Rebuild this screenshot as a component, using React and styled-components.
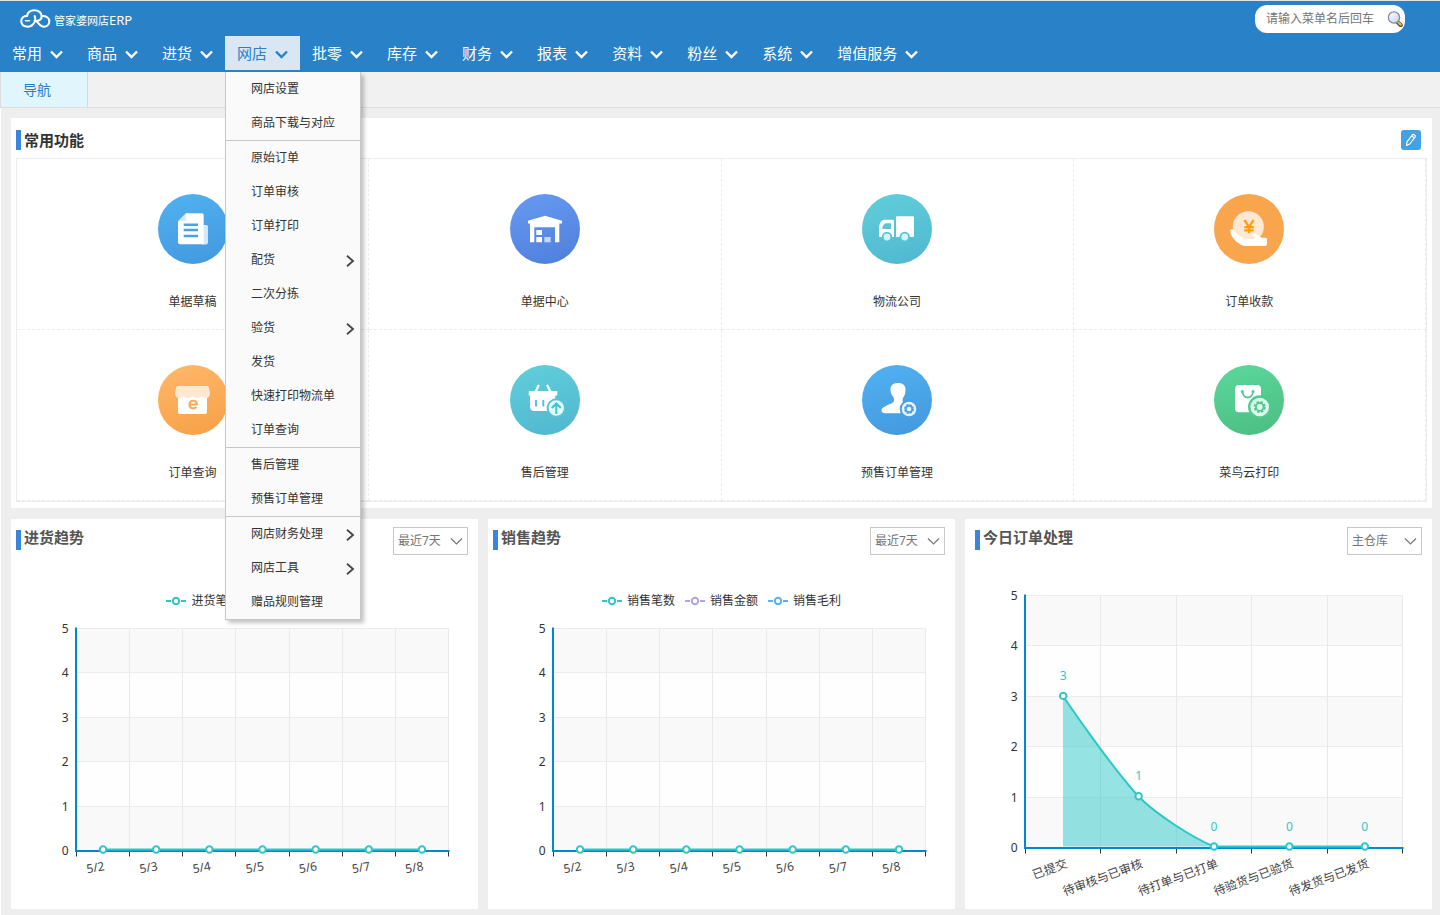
import React from "react";
import styled, { createGlobalStyle } from "styled-components";

const GlobalStyle = createGlobalStyle`
  *, *::before, *::after { box-sizing: border-box; }
  body {
    margin: 0;
    background: #eeeeee;
    color: #333333;
    font-family: "Noto Sans", "Noto Sans CJK SC", sans-serif;
    font-size: 12px;
  }
  button, input, select { font-family: inherit; }
  ul { list-style: none; margin: 0; padding: 0; }
`;

const Header = styled.header`
  height: 72px;
  border-top: 1px solid #dfe6ea;
  background: #2981c8;
  color: #ffffff;
`;

const TopRow = styled.div`
  display: flex;
  justify-content: space-between;
  align-items: center;
  height: 35px;
  padding: 0 35px 0 20px;
`;

const Brand = styled.a`
  display: flex;
  align-items: center;
  gap: 3px;
  color: #ffffff;
  font-size: 11px;
  line-height: 18px;
  text-decoration: none;
  svg { display: block; }
`;

const BrandName = styled.span`
  padding-top: 3px;
`;

const BrandSuffix = styled.span`
  font-size: 13px;
`;

const SearchBox = styled.label`
  display: flex;
  align-items: center;
  width: 150px;
  height: 28px;
  padding: 0 2px 0 11px;
  border-radius: 12px;
  background: #ffffff;
`;

const SearchInput = styled.input`
  flex: 1;
  min-width: 0;
  padding: 0;
  border: 0;
  outline: 0;
  background: transparent;
  font-size: 12px;
  &::placeholder { color: #757575; opacity: 1; }
`;

const NavList = styled.ul`
  display: flex;
`;

const NavItem = styled.li`
  position: relative;
`;

const NavButton = styled.button`
  display: flex;
  align-items: center;
  gap: 8px;
  height: 34px;
  padding: 0 12px;
  border: 0;
  background: ${(p) => (p.$active ? "#d9e7f4" : "transparent")};
  color: ${(p) => (p.$active ? "#2981c8" : "#ffffff")};
  font-size: 15px;
  line-height: 20px;
  white-space: nowrap;
  cursor: pointer;
  svg { margin-top: 2px; }
`;

const Dropdown = styled.div`
  position: absolute;
  z-index: 2;
  top: calc(100% + 2px);
  left: 0;
  width: 136px;
  border: solid #c8c8c8;
  border-width: 0 1px 1px;
  background: #fafafa;
  box-shadow: 3px 3px 4px rgba(0, 0, 0, 0.24);
`;

const MenuGroup = styled.ul`
  & + & { border-top: 1px solid #c8c8c8; }
`;

const MenuLink = styled.a`
  display: flex;
  align-items: center;
  justify-content: space-between;
  height: 34px;
  padding: 0 5px 0 25px;
  color: #333333;
  line-height: 18px;
  text-decoration: none;
  white-space: nowrap;
  svg { margin-top: 1px; }
`;

const TabBar = styled.nav`
  display: flex;
  height: 36px;
  border-left: 1px solid #dddddd;
  border-bottom: 1px solid #dddddd;
  background: #f1f1f1;
`;

const Tab = styled.a`
  width: 87px;
  padding-left: 22px;
  border-right: 1px solid #d3d9dc;
  background: #e1f5fd;
  color: #2981c8;
  font-size: 14px;
  line-height: 35px;
  text-decoration: none;
`;

const Main = styled.main`
  display: grid;
  gap: 11px;
  padding: 10px 8px 6px 10px;
  border-left: 1px solid #ffffff;
`;

const Card = styled.section`
  min-width: 0;
  background: #ffffff;
`;

const FunctionsCard = styled(Card)`
  padding: 0 5px 6px;
`;

const FunctionsHeader = styled.div`
  display: flex;
  align-items: center;
  justify-content: space-between;
  height: 40px;
  padding: 4px 6px 0 0;
`;

const Title = styled.h2`
  display: flex;
  gap: 3px;
  margin: 0;
  color: ${(p) => (p.$muted ? "#555555" : "#333333")};
  font-size: 15px;
  font-weight: 700;
  line-height: ${(p) => (p.$muted ? "14px" : "20px")};
  &::before {
    content: "";
    width: 5px;
    height: 20px;
    background: #3a84dc;
  }
`;

const EditButton = styled.button`
  display: grid;
  place-items: center;
  width: 20px;
  height: 20px;
  padding: 0;
  border: 0;
  border-radius: 3px;
  background: #45a1e6;
  cursor: pointer;
`;

const FunctionGrid = styled.ul`
  display: grid;
  grid-template-columns: repeat(4, 1fr);
  border: 1px solid #ececec;
`;

const FunctionCell = styled.li`
  border: dashed #ececec;
  border-width: 0 1px 1px 0;
`;

const FunctionLink = styled.a`
  display: flex;
  flex-direction: column;
  align-items: center;
  gap: 29px;
  height: 170px;
  padding-top: 35px;
  color: #333333;
  line-height: 18px;
  text-decoration: none;
  svg { display: block; }
`;

const ChartRow = styled.div`
  display: grid;
  grid-template-columns: repeat(3, minmax(0, 1fr));
  gap: 10px;
`;

const ChartHeader = styled.div`
  display: flex;
  align-items: flex-start;
  justify-content: space-between;
  height: 46px;
  padding: 8px 10px 0 ${(p) => (p.$inset ? "10px" : "5px")};
  ${Title} { padding-top: 3px; }
`;

const SelectBox = styled.div`
  display: grid;
  align-items: center;
  width: 75px;
  > * { grid-area: 1 / 1; }
  svg { justify-self: end; margin-right: 5px; pointer-events: none; }
`;

const Select = styled.select`
  appearance: none;
  width: 100%;
  height: 28px;
  padding: 0 4px 1px;
  border: 1px solid #c8c8c8;
  border-radius: 0;
  background: #ffffff;
  color: #757575;
  font-size: 12px;
`;

const Legend = styled.ul`
  display: flex;
  justify-content: center;
  gap: 10px;
  height: 46px;
  padding-top: 26px;
  line-height: 20px;
`;

const LegendItem = styled.li`
  display: flex;
  align-items: center;
  gap: 5px;
`;

const ChartSvg = styled.svg`
  display: block;
  width: 100%;
  height: auto;
  font-size: 12px;
`;

function Chevron({ weight = 2.4, right = false, color = "currentColor" }) {
  return right ? (
    <svg width="10" height="14" viewBox="0 0 10 14" fill="none" stroke="#444" strokeWidth="1.800" aria-hidden="true">
      <path d="M2 1.800l6 5.200-6 5.200" />
    </svg>
  ) : (
    <svg width="13" height="9" viewBox="0 0 13 9" fill="none" stroke={color} strokeWidth={weight} aria-hidden="true">
      <path d="M1 1.500l5.500 5.500 5.500-5.500" />
    </svg>
  );
}

function CloudLogo() {
  return (
    <svg width="31" height="19" viewBox="0 0 31 19" fill="none" stroke="#fff" strokeWidth="2.100" strokeLinecap="round" aria-hidden="true">
      <path d="M11.500 16.700C8 18.800 1.300 17.800 1.300 12.200C1.300 8.800 4 6.900 7 6.900C7.600 3.400 10.600 1.200 14.400 1.200C18.400 1.200 21.600 3.800 21.700 7.200C21.800 10.200 19 12.100 16.300 12.100C18.800 14 20 17.700 24 17.700C27.200 17.700 29.300 15.200 29.300 12.200C29.300 9 26.200 6.600 21.700 7" />
      <path d="M14.700 7.200C16.200 10.600 14.600 14.800 11.500 16.700" />
      <path d="M5.500 11.800H9.500" strokeWidth="1.600" />
    </svg>
  );
}

function Magnifier() {
  return (
    <svg width="16" height="16" viewBox="0 0 16 16" aria-hidden="true">
      <defs>
        <linearGradient id="lens" x1="0" y1="0" x2="1" y2="1">
          <stop offset="0" stopColor="#fff" />
          <stop offset="1" stopColor="#bfd2f8" />
        </linearGradient>
      </defs>
      <path d="M10.500 11l3.300 3.200" stroke="#5b4a2c" strokeWidth="4" strokeLinecap="round" />
      <path d="M11 11l2.600 2.600" stroke="#eab640" strokeWidth="2.400" strokeLinecap="round" />
      <circle cx="7" cy="6.500" r="5.600" fill="url(#lens)" stroke="#858a93" strokeWidth="1.300" />
    </svg>
  );
}

const glyphs = {
  draft: (
    <>
      <path d="M45 31h3.500a1.500 1.500 0 0 1 1.500 1.500v16a2 2 0 0 1-2 2h-4z" fill="#cfe9ff" />
      <path d="M28 19.300h16a1.700 1.700 0 0 1 1.700 1.700v29.300H22a2 2 0 0 1-2-2V27.300z" fill="#fff" />
      <path d="M28 19.300v6a2 2 0 0 1-2 2h-6z" fill="#cfe9ff" />
      <path d="M25.700 30.700H40M25.700 36H40M25.700 42H40" stroke="#48a3e6" strokeWidth="2.600" />
    </>
  ),
  warehouse: (
    <>
      <path d="M18 26.700L35 21.700l17 5v2.800h-2.700v18.800H45v-15H24.300v15H20V29.500h-2z" fill="#fff" />
      <path d="M26.300 36H32v5h-5.700zM26.300 43H32v5.300h-5.700z" fill="#fff" />
      <path d="M34.300 43h6.400v5.300h-6.400z" fill="#c4d6ff" />
    </>
  ),
  truck: (
    <>
      <path d="M35 22.300h16a1 1 0 0 1 1 1v18.700a1 1 0 0 1-1 1H34V23.300a1 1 0 0 1 1-1z" fill="#fff" />
      <path d="M22.500 25.800H31a1 1 0 0 1 1 1V43H18a1 1 0 0 1-1-1V34.300c0-4 2-8.500 5.500-8.500zM24.500 29.300c-2.500 0-4 2.500-4.200 5.700H29v-5.700z" fill="#fff" fillRule="evenodd" />
      <circle cx="25" cy="43" r="4.300" fill="#d0f6fb" stroke="#58c2d3" strokeWidth="1.800" />
      <circle cx="42.700" cy="43" r="4.300" fill="#d0f6fb" stroke="#58c2d3" strokeWidth="1.800" />
    </>
  ),
  payment: (
    <>
      <circle cx="34.300" cy="32.700" r="15.500" fill="#ffe8d1" />
      <path d="M30.500 26l4.500 7 4.500-7M35 32.500v6.800M30.300 33.200h9.400M30.300 36.300h9.400" fill="none" stroke="#ff9b0c" strokeWidth="2.300" />
      <path d="M16.300 37c0-2 2-2.800 3.300-1.300C22 39 27 44.500 34 45h6c1.500-.2 1-1.800-.8-2.800-1.700-1-1.500-2.800.6-2.900 2.500 0 5.200 3.500 8.200 4.500h3.500A1.500 1.500 0 0 1 53 45.300V50a2 2 0 0 1-2 2H32c-6 0-15.700-8-15.700-15z" fill="#fff" />
    </>
  ),
  shop: (
    <>
      <path d="M20 29h29v18a2 2 0 0 1-2 2H22a2 2 0 0 1-2-2z" fill="#fff" />
      <path d="M20 21h29a2 2 0 0 1 1.800 1.200L52 28c0 3-1.500 5-3.700 5-2.500 0-4-1-4.800-2.300C42.500 32 41 33 39 33s-3.500-1-4.500-2.300C33.500 32 32 33 30 33s-3.500-1-4.500-2.300C24.500 32 23 33 21.200 33 18.500 33 17 31 17 28l1.200-5.800A2 2 0 0 1 20 21z" fill="#ffe8d3" />
      <path d="M31.500 39.500h7.300c0-5-7.300-5-7.300 0 0 4.500 4.800 4.700 7 2.500" fill="none" stroke="#fbab59" strokeWidth="2.200" />
    </>
  ),
  basket: (
    <>
      <path d="M28.500 20.700L25.500 27M37.500 20.700l3 6.300" stroke="#fff" strokeWidth="2.200" strokeLinecap="round" />
      <path d="M18.700 26h28.600v4.500h-2V44a2 2 0 0 1-2 2h-19C21.500 46 20 44 20 41.500v-11h-1.300z" fill="#fff" />
      <path d="M26 35v6.500M33.300 35v6.500" stroke="#58c2d3" strokeWidth="2" />
      <circle cx="46.300" cy="43" r="8.700" fill="#dffbff" stroke="#58c2d3" strokeWidth="2" />
      <path d="M46.300 49V38.500M41.800 43l4.500-4.500 4.500 4.500" fill="none" stroke="#45bfd1" strokeWidth="2" />
    </>
  ),
  presale: (
    <>
      <path d="M36 18c5 0 7.500 2.500 7.500 6.500 0 3-.5 5.700-1.800 7.200C40.500 33 40.300 36 41 37l3 3v8.300H24c-3 0-5-1.500-4.500-3.500C20 42 28 39 31 37.500c1.500-1 1.300-4.500 0-6-1.700-1.500-2.500-4-2.500-7 0-4 2.500-6.500 7.500-6.500z" fill="#fff" />
      <circle cx="47" cy="44" r="8.300" fill="#e5f4ff" stroke="#489fe3" strokeWidth="2" />
      <circle cx="47" cy="44" r="4" fill="none" stroke="#489fe3" strokeWidth="1.800" strokeDasharray="2.300 .84" />
      <circle cx="47" cy="44" r="3" fill="none" stroke="#489fe3" strokeWidth="1.300" />
    </>
  ),
  print: (
    <>
      <rect x="21" y="20" width="26" height="27.300" rx="4" fill="#fff" />
      <path d="M28.500 26.500c.5 8 10 8 10.500 0" fill="none" stroke="#52c991" strokeWidth="1.800" />
      <circle cx="28.300" cy="26.500" r="1.500" fill="#52c991" />
      <circle cx="39" cy="26.500" r="1.500" fill="#52c991" />
      <circle cx="45.700" cy="42" r="10.500" fill="#defbed" stroke="#52c991" strokeWidth="2.400" />
      <circle cx="45.700" cy="42" r="5" fill="none" stroke="#52c991" strokeWidth="2" strokeDasharray="2.500 1.430" />
      <circle cx="45.700" cy="42" r="3.800" fill="none" stroke="#52c991" strokeWidth="1.800" />
    </>
  ),
};

const functions = [
  { label: "单据草稿", glyph: "draft", from: "#50b0ef", to: "#449ae0" },
  { label: "单据中心", glyph: "warehouse", from: "#6698f1", to: "#5081dc" },
  { label: "物流公司", glyph: "truck", from: "#60cdda", to: "#51b9d0" },
  { label: "订单收款", glyph: "payment", from: "#f9a54e", to: "#f9a54e" },
  { label: "订单查询", glyph: "shop", from: "#ffb668", to: "#f7a24a" },
  { label: "售后管理", glyph: "basket", from: "#60cdda", to: "#51b9d0" },
  { label: "预售订单管理", glyph: "presale", from: "#50b0ef", to: "#449ae0" },
  { label: "菜鸟云打印", glyph: "print", from: "#5bd69b", to: "#4dbf84" },
];

function FunctionIcon({ glyph, from, to }) {
  const id = `fill-${glyph}`;
  return (
    <svg width="70" height="70" viewBox="0 0 70 70" aria-hidden="true">
      <defs>
        <linearGradient id={id} x1="0.300" y1="0" x2="0.600" y2="1">
          <stop offset="0" stopColor={from} />
          <stop offset="1" stopColor={to} />
        </linearGradient>
      </defs>
      <circle cx="35" cy="35" r="35" fill={`url(#${id})`} />
      {glyphs[glyph]}
    </svg>
  );
}

const navItems = ["常用", "商品", "进货", "网店", "批零", "库存", "财务", "报表", "资料", "粉丝", "系统", "增值服务"];

const menuGroups = [
  [["网店设置"], ["商品下载与对应"]],
  [["原始订单"], ["订单审核"], ["订单打印"], ["配货", true], ["二次分拣"], ["验货", true], ["发货"], ["快速打印物流单"], ["订单查询"]],
  [["售后管理"], ["预售订单管理"]],
  [["网店财务处理", true], ["网店工具", true], ["赠品规则管理"]],
];

const TEAL = "#2ec7c9";
const AXIS = "#008acd";

function Plot({ left, right, top, bottom, columns }) {
  const step = (bottom - top) / 5;
  const colWidth = (right - left) / columns;
  const crisp = (v) => Math.floor(v) + 0.5;
  const rows = [0, 1, 2, 3, 4, 5];
  const cols = Array.from({ length: columns + 1 }, (_, i) => crisp(left + i * colWidth));
  return (
    <>
      {rows.slice(0, 5).map((r) => (
        <rect key={r} x={left} y={top + r * step} width={right - left} height={step} fill={r % 2 ? "#fefefe" : "#f9f9f9"} />
      ))}
      {rows.map((r) => (
        <path key={r} d={`M${left} ${crisp(top + r * step)}H${right}`} stroke="#ececec" />
      ))}
      {cols.map((x) => (
        <path key={x} d={`M${x} ${top}V${bottom}`} stroke="#e9e9e9" />
      ))}
      {cols.map((x) => (
        <path key={x} d={`M${x} ${bottom}v6`} stroke="#333" />
      ))}
      {rows.map((r) => (
        <text key={r} x={left - 8} y={Math.floor(top + r * step) + 5} textAnchor="end" fill="#333">{5 - r}</text>
      ))}
    </>
  );
}

function AxisLines({ left, right, top, bottom }) {
  return <path d={`M${left - 0.5} ${top - 1}V${bottom + 0.5}H${right + 1}`} fill="none" stroke={AXIS} strokeWidth="2" />;
}

function Marker({ x, y }) {
  return <circle cx={x} cy={y} r="3.200" fill="#fff" stroke={TEAL} strokeWidth="2" />;
}

const days = ["5/2", "5/3", "5/4", "5/5", "5/6", "5/7", "5/8"];

function TrendChart({ label }) {
  const box = { left: 65.5, right: 437.5, top: 17.5, bottom: 239.5, columns: 7 };
  const colWidth = (box.right - box.left) / 7;
  const center = (i) => box.left + colWidth * (i + 0.5);
  return (
    <ChartSvg viewBox="0 0 467 298" role="img" aria-label={label}>
      <Plot {...box} />
      <AxisLines {...box} />
      <path d={`M${center(0)} 238.500H${center(6)}`} stroke={TEAL} strokeWidth="2" />
      {days.map((day, i) => (
        <g key={day}>
          <Marker x={center(i)} y={238.5} />
          <text transform={`translate(${center(i) + 2} 259) rotate(-10)`} textAnchor="end" fill="#444">{day}</text>
        </g>
      ))}
    </ChartSvg>
  );
}

const stages = [
  ["已提交", 3],
  ["待审核与已审核", 1],
  ["待打单与已打单", 0],
  ["待验货与已验货", 0],
  ["待发货与已发货", 0],
];

function OrderChart({ label }) {
  const box = { left: 60.5, right: 437.5, top: 30.5, bottom: 282.5, columns: 5 };
  const colWidth = (box.right - box.left) / 5;
  const center = (i) => box.left + colWidth * (i + 0.5);
  const curve = "M98 131C98 131 144 199 173.500 231.500C192 250 228 273 249 281.500H400";
  return (
    <ChartSvg viewBox="0 0 467 344" role="img" aria-label={label}>
      <Plot {...box} />
      <AxisLines {...box} />
      <path d={`${curve}H98Z`} fill={TEAL} fillOpacity="0.5" />
      <path d={curve} fill="none" stroke={TEAL} strokeWidth="2" />
      {stages.map(([stage, value], i) => {
        const y = 281.5 - value * 50.2;
        return (
          <g key={stage}>
            <Marker x={center(i)} y={y} />
            <text x={center(i)} y={y - 16} textAnchor="middle" fill={TEAL}>{value}</text>
            <text transform={`translate(${center(i) + 5} 302) rotate(-20)`} textAnchor="end" fill="#444">{stage}</text>
          </g>
        );
      })}
    </ChartSvg>
  );
}

function ChartLegend({ items }) {
  return (
    <Legend>
      {items.map(([name, color]) => (
        <LegendItem key={name}>
          <svg width="20" height="10" viewBox="0 0 20 10" fill="none" stroke={color} strokeWidth="2" aria-hidden="true">
            <path d="M0 5h5M15 5h5" />
            <circle cx="10" cy="5" r="3.200" />
          </svg>
          {name}
        </LegendItem>
      ))}
    </Legend>
  );
}

function ChartCard({ title, option, inset, children }) {
  return (
    <Card>
      <ChartHeader $inset={inset}>
        <Title $muted>{title}</Title>
        <SelectBox>
          <Select aria-label={title} defaultValue={option}>
            <option>{option}</option>
          </Select>
          <Chevron weight={1.2} color="#777" />
        </SelectBox>
      </ChartHeader>
      {children}
    </Card>
  );
}

export default function App() {
  return (
    <>
      <GlobalStyle />
      <Header>
        <TopRow>
          <Brand href="#">
            <CloudLogo />
            <BrandName>管家婆网店<BrandSuffix>ERP</BrandSuffix></BrandName>
          </Brand>
          <SearchBox>
            <SearchInput type="text" placeholder="请输入菜单名后回车" aria-label="请输入菜单名后回车" />
            <Magnifier />
          </SearchBox>
        </TopRow>
        <nav>
          <NavList>
            {navItems.map((item) => {
              const active = item === "网店";
              return (
                <NavItem key={item}>
                  <NavButton type="button" $active={active} aria-expanded={active}>
                    {item}
                    <Chevron />
                  </NavButton>
                  {active && (
                    <Dropdown>
                      {menuGroups.map((group) => (
                        <MenuGroup key={group[0][0]}>
                          {group.map(([label, submenu]) => (
                            <li key={label}>
                              <MenuLink href="#">
                                {label}
                                {submenu && <Chevron right />}
                              </MenuLink>
                            </li>
                          ))}
                        </MenuGroup>
                      ))}
                    </Dropdown>
                  )}
                </NavItem>
              );
            })}
          </NavList>
        </nav>
      </Header>
      <TabBar>
        <Tab href="#">导航</Tab>
      </TabBar>
      <Main>
        <FunctionsCard>
          <FunctionsHeader>
            <Title>常用功能</Title>
            <EditButton type="button" aria-label="编辑">
              <svg width="14" height="14" viewBox="0 0 14 14" fill="none" stroke="#fff" strokeWidth="1.200" strokeLinejoin="round" aria-hidden="true">
                <path d="M2.500 12.500l.5-3.600 5.400-7.100c.9-1.100 3.600.8 2.800 2.100L5.700 11zM7.700 3l2.800 2" />
              </svg>
            </EditButton>
          </FunctionsHeader>
          <FunctionGrid>
            {functions.map((item) => (
              <FunctionCell key={item.label}>
                <FunctionLink href="#">
                  <FunctionIcon {...item} />
                  {item.label}
                </FunctionLink>
              </FunctionCell>
            ))}
          </FunctionGrid>
        </FunctionsCard>
        <ChartRow>
          <ChartCard title="进货趋势" option="最近7天">
            <ChartLegend items={[["进货笔数", TEAL], ["进货金额", "#b6a2de"]]} />
            <TrendChart label="进货趋势" />
          </ChartCard>
          <ChartCard title="销售趋势" option="最近7天">
            <ChartLegend items={[["销售笔数", TEAL], ["销售金额", "#b6a2de"], ["销售毛利", "#5ab1ef"]]} />
            <TrendChart label="销售趋势" />
          </ChartCard>
          <ChartCard title="今日订单处理" option="主仓库" inset>
            <OrderChart label="今日订单处理" />
          </ChartCard>
        </ChartRow>
      </Main>
    </>
  );
}
